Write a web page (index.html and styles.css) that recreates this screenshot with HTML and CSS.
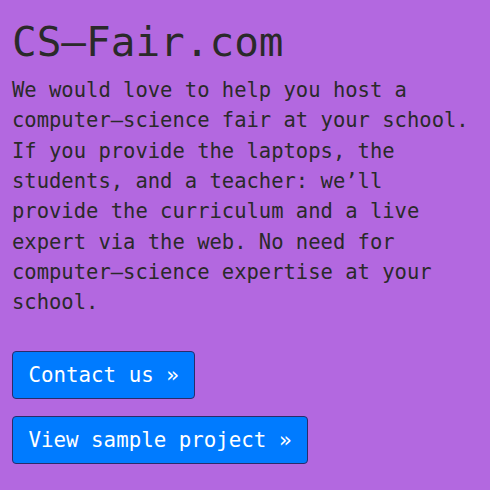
FILE: index.html
```html
<!DOCTYPE html>
<html>
<head>
<meta charset="utf-8">
<link rel="stylesheet" href="styles.css">
</head>
<body>
<main class="page">
  <h1 class="title">CS–Fair.com</h1>
  <p class="intro">We would love to help you host a computer–science fair at your school. If you provide the laptops, the students, and a teacher: we’ll provide the curriculum and a live expert via the web. No need for computer–science expertise at your school.</p>
  <div class="actions">
    <a class="btn" href="#">Contact us »</a>
    <a class="btn" href="#">View sample project »</a>
  </div>
</main>
</body>
</html>
```

FILE: styles.css
```css
html, body {
  margin: 0;
  padding: 0;
  background: #b368e0;
}
.page {
  padding: 12px;
  font-family: "DejaVu Sans Mono", monospace;
  color: #2a2a2a;
}
.title {
  font-size: 41px;
  font-weight: normal;
  line-height: 1.2;
  margin: 6px 0 8px;
}
.intro {
  font-size: 20.5px;
  line-height: 30.3px;
  margin: 0 0 33px;
  max-width: 470px;
}
.actions {
  display: flex;
  flex-direction: column;
  align-items: flex-start;
  gap: 17px;
}
.btn {
  display: inline-block;
  font-size: 20.8px;
  line-height: 30px;
  padding: 8px 15.5px;
  background: #007bff;
  color: #fff;
  text-decoration: none;
  border: 1px solid #2b2b6b;
  border-radius: 4px;
}
```
